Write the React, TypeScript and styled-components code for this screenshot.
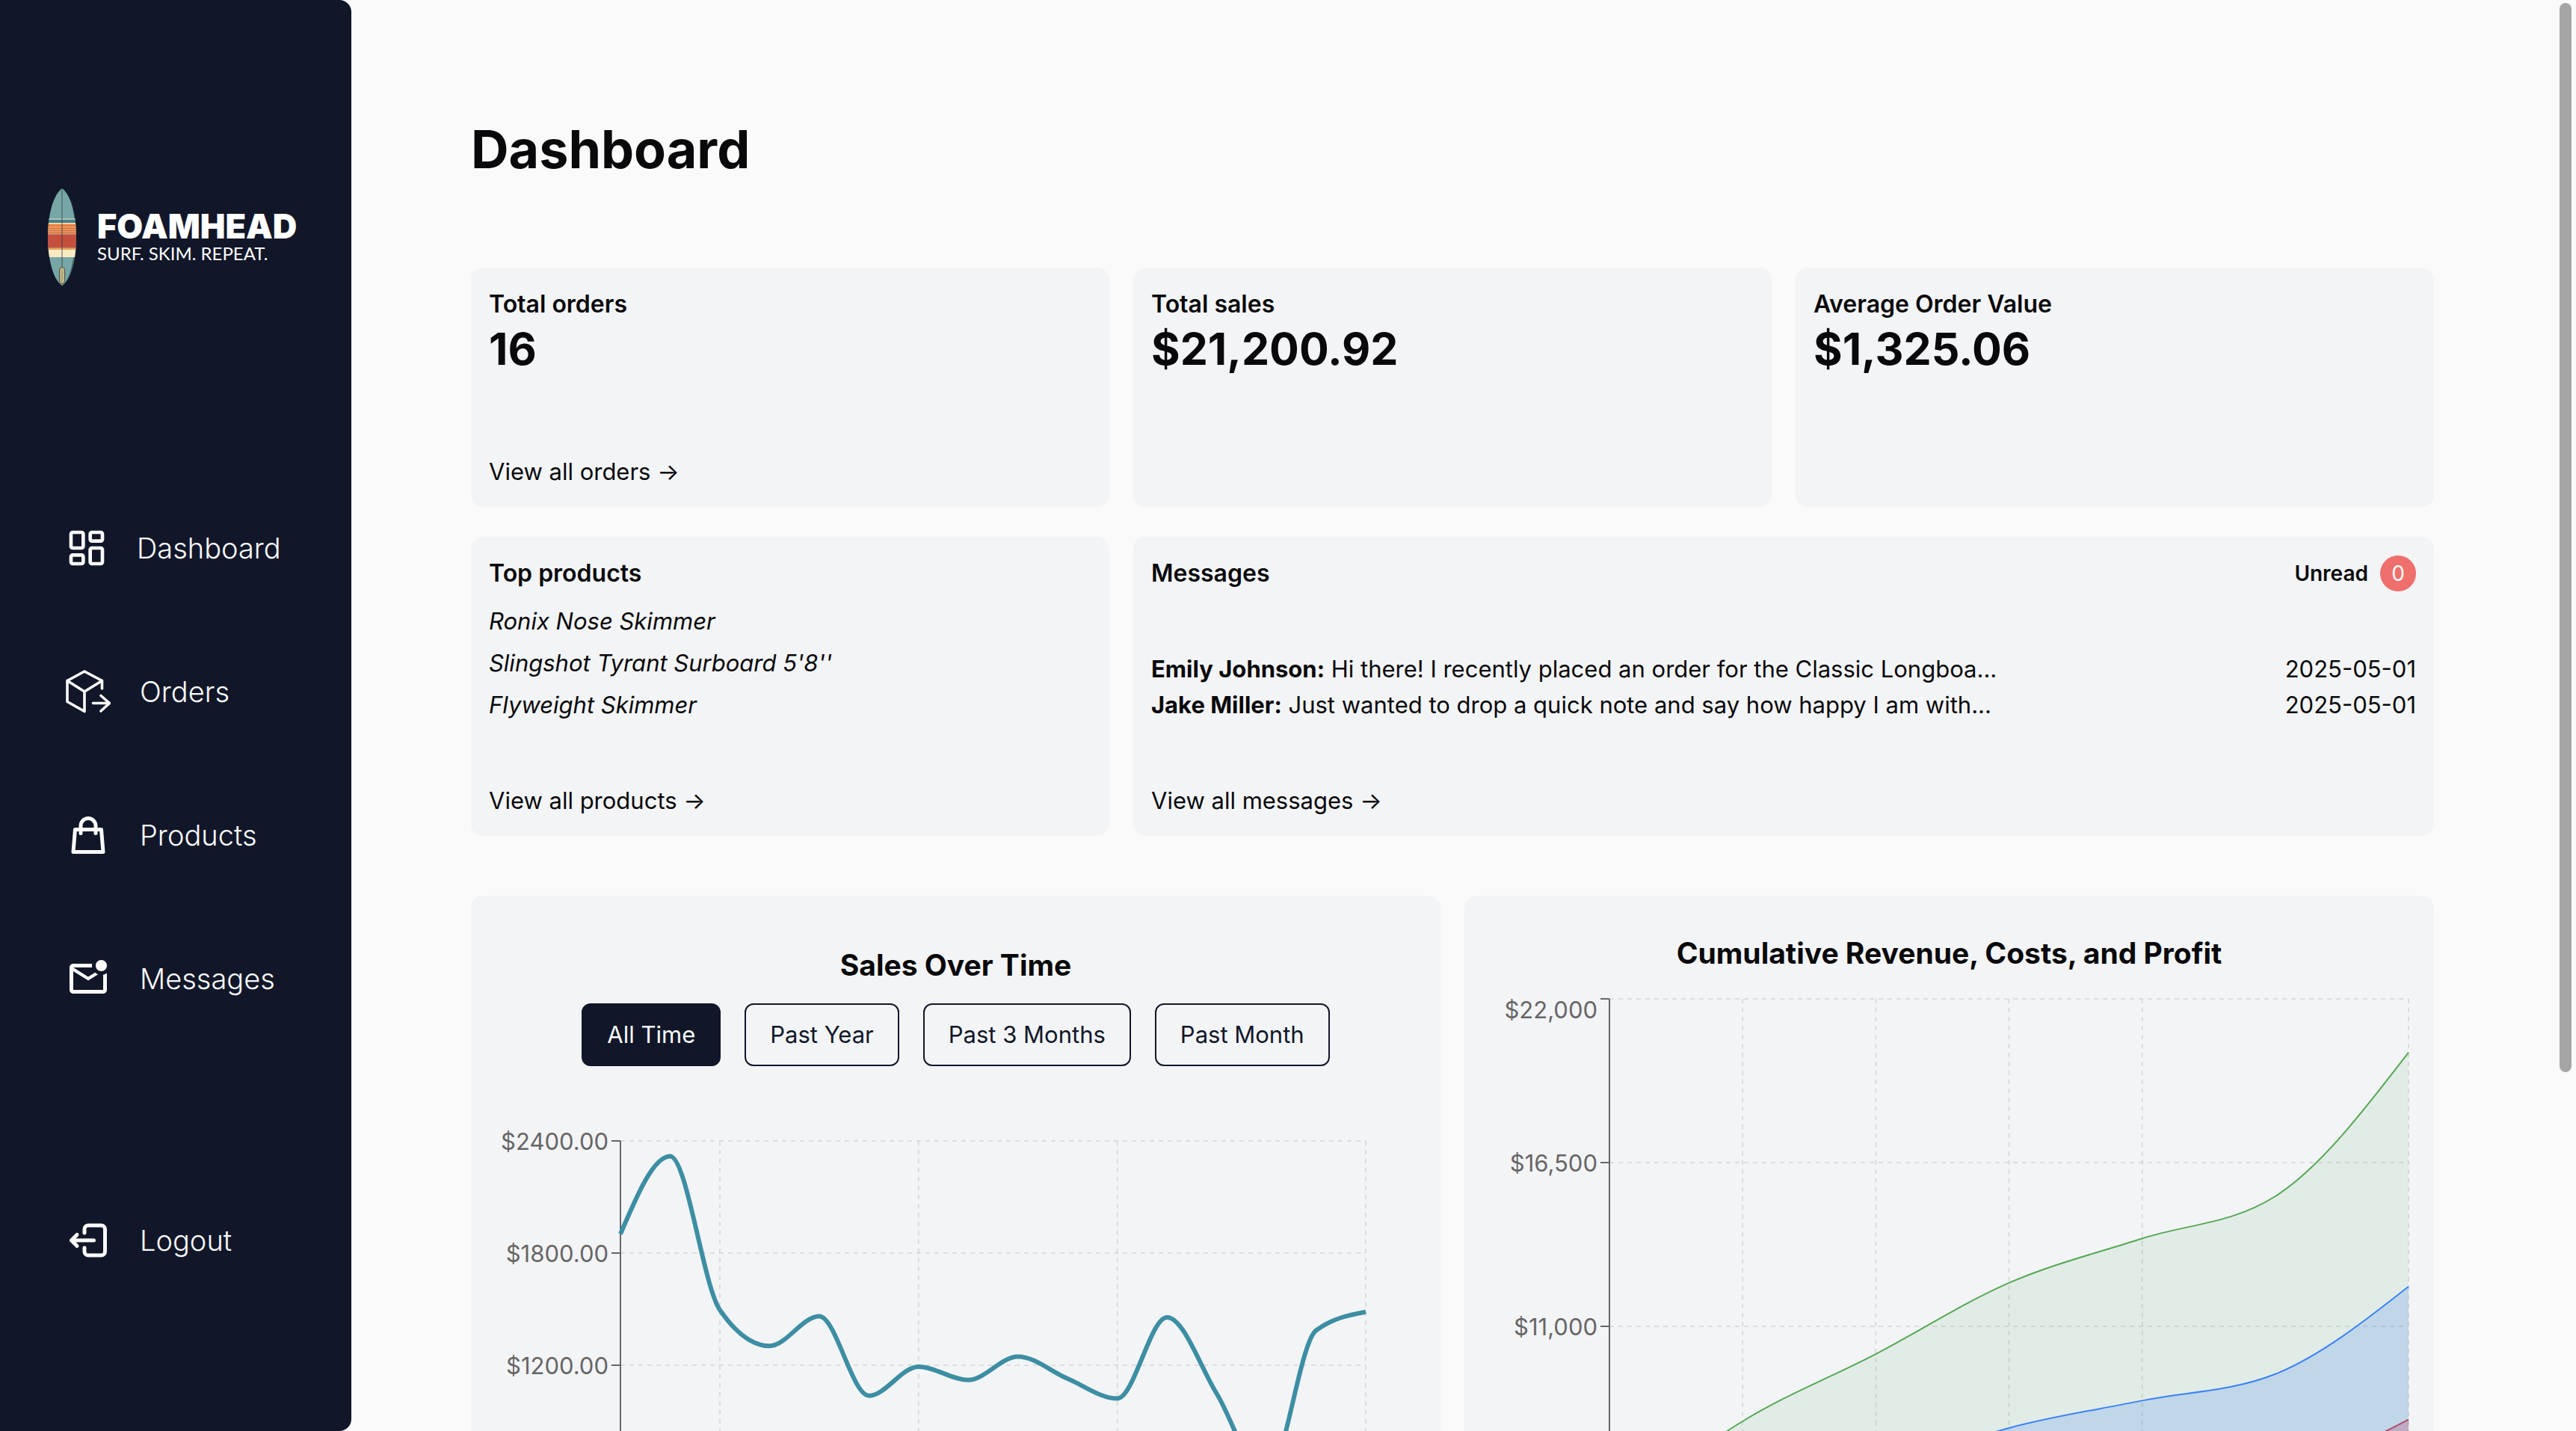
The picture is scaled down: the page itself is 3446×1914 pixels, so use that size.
import React, { useLayoutEffect, useRef, useState } from "react";
import styled, { createGlobalStyle, css } from "styled-components";
import { MdOutlineMarkEmailUnread } from "react-icons/md";

const navy = "#111729";
const ink = "#09090b";
const paper = "#fafafa";
const panel = "#f3f4f6";

const GlobalStyle = createGlobalStyle`
  *, *::before, *::after { box-sizing: border-box; }
  body {
    margin: 0;
    background: ${paper};
    color: ${ink};
    font-family: Inter, "Liberation Sans", sans-serif;
    font-size: 31px;
    line-height: 48px;
    -webkit-font-smoothing: antialiased;
  }
  h1, h2, h3, p, ul { margin: 0; padding: 0; }
  ul { list-style: none; }
  a { color: inherit; text-decoration: none; }
`;

const Shell = styled.div`
  display: flex;
  height: 100vh;
  overflow: hidden;
`;

const Sidebar = styled.aside`
  flex: 0 0 470px;
  display: flex;
  flex-direction: column;
  background: ${navy};
  color: ${paper};
  border-radius: 0 16px 16px 0;
`;

const Brand = styled.a`
  display: flex;
  align-items: center;
  gap: 25px;
  padding: 251px 0 0 63px;
`;

const BrandText = styled.span`
  display: flex;
  flex-direction: column;
  color: #fff;
`;

const BrandName = styled.span`
  font-size: 45px;
  font-weight: 900;
  line-height: 44px;
`;

const BrandTagline = styled.span`
  font-family: Lato, "Liberation Sans", sans-serif;
  font-size: 24px;
  font-weight: 400;
  line-height: 28px;
`;

const Nav = styled.nav`
  display: flex;
  flex-direction: column;
  gap: 132px;
  padding: 320px 0 0 88px;
`;

const NavFooter = styled.div`
  display: flex;
  padding: 290px 0 0 88px;
`;

const navItem = css`
  display: flex;
  align-items: center;
  gap: 39px;
  height: 60px;
  color: ${paper};
  font-size: 38px;
  font-weight: 300;
  line-height: 56px;
`;

const NavLink = styled.a`
  ${navItem}
`;

const LogoutButton = styled.button`
  ${navItem}
  padding: 0;
  border: 0;
  background: none;
  font-family: inherit;
  cursor: pointer;
`;

const Main = styled.main`
  flex: 1;
  min-width: 0;
  padding: 160px 160px 0;
`;

const PageTitle = styled.h1`
  font-size: 70px;
  font-weight: 700;
  line-height: 80px;
  margin-bottom: 118px;
`;

const StatGrid = styled.div`
  display: grid;
  grid-template-columns: repeat(3, minmax(0, 1fr));
  gap: 40px 32px;
`;

const Card = styled.section<{ $tall?: boolean; $wide?: boolean }>`
  display: flex;
  flex-direction: column;
  justify-content: space-between;
  min-height: ${(p) => (p.$tall ? 400 : 320)}px;
  grid-column: ${(p) => (p.$wide ? "span 2" : "auto")};
  padding: 25px 24px 23px;
  border-radius: 16px;
  background: ${panel};
`;

const CardTitle = styled.h2`
  font-size: 32px;
  font-weight: 600;
  line-height: 48px;
`;

const Figure = styled.p`
  font-size: 59px;
  font-weight: 700;
  line-height: 72px;
`;

const CardLink = styled.a`
  align-self: flex-start;
`;

const ProductList = styled.ul`
  display: flex;
  flex-direction: column;
  gap: 8px;
  margin-top: 16px;
  font-style: italic;
`;

const CardHeader = styled.div`
  display: flex;
  align-items: center;
  justify-content: space-between;
`;

const Unread = styled.div`
  display: flex;
  align-items: center;
  gap: 16px;
  font-size: 28px;
  font-weight: 600;
`;

const Badge = styled.span`
  width: 48px;
  height: 48px;
  border-radius: 50%;
  background: #ef6f6c;
  color: ${paper};
  font-weight: 400;
  text-align: center;
`;

const MessageRow = styled.li`
  display: flex;
  justify-content: space-between;
`;

const Sender = styled.strong`
  font-weight: 700;
`;

const ChartGrid = styled.div`
  display: grid;
  grid-template-columns: repeat(2, minmax(0, 1fr));
  gap: 32px;
  margin-top: 80px;
`;

const ChartCard = styled.section<{ $top: number }>`
  display: flex;
  flex-direction: column;
  align-items: center;
  padding: ${(p) => p.$top}px 24px 48px;
  border-radius: 16px;
  background: ${panel};
`;

const ChartTitle = styled.h3`
  font-size: 39px;
  font-weight: 700;
  line-height: 58px;
`;

const RangeBar = styled.div`
  display: flex;
  gap: 32px;
  margin: 22px 0 88px;
`;

const RangeButton = styled.button<{ $active?: boolean }>`
  padding: 16px 32px;
  border: 2px solid ${navy};
  border-radius: 12px;
  background: ${(p) => (p.$active ? navy : "transparent")};
  color: ${(p) => (p.$active ? paper : navy)};
  font-family: inherit;
  font-size: 31px;
  line-height: 48px;
  cursor: pointer;
`;

const ChartBox = styled.div`
  width: 100%;
`;

const ChartSvg = styled.svg`
  display: block;
  overflow: visible;
`;

const TickLabel = styled.text`
  fill: #666;
  font-size: 31px;
  text-anchor: end;
`;

const ScrollTrack = styled.div`
  flex: 0 0 30px;
  padding: 4px 6px 4px 8px;
`;

const ScrollThumb = styled.div`
  height: 75%;
  border-radius: 8px;
  background: #a5a5a5;
`;

/* ---------- icons ---------- */

const Surfboard = () => (
  <svg width="42" height="132" viewBox="0 0 42 132" aria-hidden="true">
    <defs>
      <clipPath id="board">
        <path d="M20 1C9 9 1 34 1 66c0 30 7 57 19 65 12-8 19-35 19-65C39 34 31 9 20 1z" />
      </clipPath>
    </defs>
    <g clipPath="url(#board)">
      <path d="M0 0h42v132H0z" fill="#76a6a5" />
      <path d="M22 0C32 12 37 32 37 64c0 30-4 50-15 68h20V0z" fill="#3c6069" />
      <path d="M20 0C31 12 38 34 38 66c0 24-6 44-14 58L20 132z" fill="#76a6a5" />
      <path d="M0 41h42v2H0z" fill="#a9c3b8" />
      <path d="M0 43h42v4H0z" fill="#4b7f86" />
      <path d="M0 47h42v2H0z" fill="#e9d9ae" />
      <path d="M0 49h42v4H0z" fill="#ee7b3c" />
      <path d="M0 53h42v9H0z" fill="#d8683c" />
      <path d="M0 53h42M0 56h42M0 59h42M0 62h42" stroke="#efc98c" strokeWidth="1.2" />
      <path d="M0 62.600h42v18H0z" fill="#c44f3e" />
      <path d="M0 80.500h42v2.500H0z" fill="#e8a256" />
      <path d="M0 83h42v10H0z" fill="#f8eac2" />
      <path d="M20 0v108" stroke="#333f42" strokeWidth="0.800" />
      <rect x="16.600" y="106.500" width="7" height="22" rx="3.500" fill="#c3b98a" stroke="#4a4a3d" />
      <path d="M20 110v16" stroke="#8d865f" strokeWidth="0.800" />
    </g>
  </svg>
);

const DashboardIcon = () => (
  <svg width="56" height="56" viewBox="0 0 24 24" fill="none" stroke="currentColor" strokeWidth="2" strokeLinejoin="round" aria-hidden="true">
    <rect x="3" y="3" width="7" height="9" rx="1" />
    <rect x="14" y="3" width="7" height="5" rx="1" />
    <rect x="14" y="12" width="7" height="9" rx="1" />
    <rect x="3" y="16" width="7" height="5" rx="1" />
  </svg>
);

const OrdersIcon = () => (
  <svg width="60" height="60" viewBox="0 0 60 60" fill="none" stroke="currentColor" strokeWidth="3.600" strokeLinecap="round" strokeLinejoin="round" aria-hidden="true">
    <path d="M25 56.500 2 43.500V15.500L25 3l23.500 12.500V26M2 15.500 25 30l23.500-14.500M25 30v26.500" />
    <path d="M36.500 45.500H58M47 35.500l11.500 10L47 56" />
  </svg>
);

const ProductsIcon = () => (
  <svg width="60" height="60" viewBox="0 0 24 24" fill="none" stroke="currentColor" strokeWidth="2" strokeLinecap="round" strokeLinejoin="round" aria-hidden="true">
    <path d="M16 11V7a4 4 0 0 0-8 0v4M5 9h14l1 12H4L5 9z" />
  </svg>
);

const LogoutIcon = () => (
  <svg width="60" height="60" viewBox="0 0 24 24" fill="none" stroke="currentColor" strokeWidth="2" strokeLinecap="round" strokeLinejoin="round" aria-hidden="true">
    <path d="M10 8V6a2 2 0 0 1 2-2h7a2 2 0 0 1 2 2v12a2 2 0 0 1-2 2h-7a2 2 0 0 1-2-2v-2" />
    <path d="M15 12H3l3-3M6 15l-3-3" />
  </svg>
);

/* ---------- charts ---------- */

type Point = [number, number];

/* Monotone cubic interpolation: the curve never overshoots its data. */
function monotonePath(pts: Point[]): string {
  const n = pts.length;
  const slope = (i: number) => (pts[i + 1][1] - pts[i][1]) / (pts[i + 1][0] - pts[i][0]);
  const t: number[] = new Array(n).fill(0);
  for (let i = 1; i < n - 1; i++) {
    const h0 = pts[i][0] - pts[i - 1][0];
    const h1 = pts[i + 1][0] - pts[i][0];
    const s0 = slope(i - 1);
    const s1 = slope(i);
    const p = (s0 * h1 + s1 * h0) / (h0 + h1);
    t[i] = (Math.sign(s0) + Math.sign(s1)) * Math.min(Math.abs(s0), Math.abs(s1), 0.5 * Math.abs(p)) || 0;
  }
  t[0] = (3 * slope(0) - t[1]) / 2;
  t[n - 1] = (3 * slope(n - 2) - t[n - 2]) / 2;
  let d = `M${pts[0][0]},${pts[0][1]}`;
  for (let i = 1; i < n; i++) {
    const [x0, y0] = pts[i - 1];
    const [x1, y1] = pts[i];
    const dx = (x1 - x0) / 3;
    d += `C${x0 + dx},${y0 + dx * t[i - 1]},${x1 - dx},${y1 - dx * t[i]},${x1},${y1}`;
  }
  return d;
}

type Series = { values: number[]; stroke: string; width: number; fill?: string; fillOpacity?: number };
type Tick = { value: number; label: string; dy?: number };
type ChartProps = {
  label: string;
  max: number;
  plotHeight: number;
  left: number;
  right: number;
  top: number;
  ticks: Tick[];
  columns: number[];
  series: Series[];
};

function Chart({ label, max, plotHeight, left, right, top, ticks, columns, series }: ChartProps) {
  const box = useRef<HTMLDivElement>(null);
  const [width, setWidth] = useState(1200);
  useLayoutEffect(() => {
    const el = box.current;
    if (!el) return;
    const measure = () => setWidth(el.clientWidth);
    measure();
    const observer = new ResizeObserver(measure);
    observer.observe(el);
    return () => observer.disconnect();
  }, []);

  const end = width - right;
  const steps = series[0].values.length - 1;
  const x = (i: number) => left + ((end - left) * i) / steps;
  const y = (v: number) => top + plotHeight * (1 - v / max);
  const bottom = top + plotHeight;

  return (
    <ChartBox ref={box}>
      <ChartSvg width={width} height={bottom + 60} role="img" aria-label={label}>
        <g stroke="#ccc" strokeOpacity="0.6" strokeWidth="2" strokeDasharray="6 6">
          {ticks.map((t) => (
            <line key={t.value} x1={left} x2={end} y1={y(t.value)} y2={y(t.value)} />
          ))}
          {columns.map((c) => (
            <line key={c} x1={x(c)} x2={x(c)} y1={top} y2={bottom} />
          ))}
        </g>
        <g stroke="#666" strokeWidth="2">
          <line x1={left} x2={left} y1={top} y2={bottom} />
          {ticks.map((t) => (
            <line key={t.value} x1={left - 12} x2={left} y1={y(t.value)} y2={y(t.value)} />
          ))}
        </g>
        {ticks.map((t) => (
          <TickLabel key={t.value} x={left - 16} y={y(t.value) + 12 + (t.dy ?? 0)}>
            {t.label}
          </TickLabel>
        ))}
        {series.map((s, k) => {
          const d = monotonePath(s.values.map((v, i) => [x(i), y(v)] as Point));
          return (
            <g key={k}>
              {s.fill && <path d={`${d}L${end},${bottom}L${left},${bottom}Z`} fill={s.fill} fillOpacity={s.fillOpacity} />}
              <path d={d} fill="none" stroke={s.stroke} strokeWidth={s.width} />
            </g>
          );
        })}
      </ChartSvg>
    </ChartBox>
  );
}

const ranges = ["All Time", "Past Year", "Past 3 Months", "Past Month"];

const salesTicks: Tick[] = [
  { value: 2400, label: "$2400.00" },
  { value: 1800, label: "$1800.00" },
  { value: 1200, label: "$1200.00" },
];

const revenueTicks: Tick[] = [
  { value: 22000, label: "$22,000", dy: 14 },
  { value: 16500, label: "$16,500" },
  { value: 11000, label: "$11,000" },
];

const sales = [1902, 2318, 1496, 1303, 1462, 1037, 1192, 1121, 1246, 1128, 1022, 1456, 1048, 594, 1386, 1485];

const products = ["Ronix Nose Skimmer", "Slingshot Tyrant Surboard 5'8''", "Flyweight Skimmer"];

const messages = [
  { from: "Emily Johnson:", text: "Hi there! I recently placed an order for the Classic Longboa...", date: "2025-05-01" },
  { from: "Jake Miller:", text: "Just wanted to drop a quick note and say how happy I am with...", date: "2025-05-01" },
];

export default function App() {
  const [range, setRange] = useState(ranges[0]);

  return (
    <>
      <GlobalStyle />
      <Shell>
        <Sidebar>
          <Brand href="#home">
            <Surfboard />
            <BrandText>
              <BrandName>FOAMHEAD</BrandName>
              <BrandTagline>SURF. SKIM. REPEAT.</BrandTagline>
            </BrandText>
          </Brand>
          <Nav>
            <NavLink href="#dashboard"><DashboardIcon />Dashboard</NavLink>
            <NavLink href="#orders"><OrdersIcon />Orders</NavLink>
            <NavLink href="#products"><ProductsIcon />Products</NavLink>
            <NavLink href="#messages"><MdOutlineMarkEmailUnread size={60} />Messages</NavLink>
          </Nav>
          <NavFooter>
            <LogoutButton type="button"><LogoutIcon />Logout</LogoutButton>
          </NavFooter>
        </Sidebar>

        <Main>
          <PageTitle>Dashboard</PageTitle>
          <StatGrid>
            <Card>
              <div>
                <CardTitle>Total orders</CardTitle>
                <Figure>16</Figure>
              </div>
              <CardLink href="#orders">View all orders →</CardLink>
            </Card>
            <Card>
              <div>
                <CardTitle>Total sales</CardTitle>
                <Figure>$21,200.92</Figure>
              </div>
            </Card>
            <Card>
              <div>
                <CardTitle>Average Order Value</CardTitle>
                <Figure>$1,325.06</Figure>
              </div>
            </Card>
            <Card $tall>
              <div>
                <CardTitle>Top products</CardTitle>
                <ProductList>
                  {products.map((p) => <li key={p}>{p}</li>)}
                </ProductList>
              </div>
              <CardLink href="#products">View all products →</CardLink>
            </Card>
            <Card $tall $wide>
              <CardHeader>
                <CardTitle>Messages</CardTitle>
                <Unread>Unread<Badge>0</Badge></Unread>
              </CardHeader>
              <ul>
                {messages.map((m) => (
                  <MessageRow key={m.from}>
                    <span><Sender>{m.from}</Sender> {m.text}</span>
                    <time dateTime={m.date}>{m.date}</time>
                  </MessageRow>
                ))}
              </ul>
              <CardLink href="#messages">View all messages →</CardLink>
            </Card>
          </StatGrid>

          <ChartGrid>
            <ChartCard $top={64}>
              <ChartTitle>Sales Over Time</ChartTitle>
              <RangeBar>
                {ranges.map((r) => (
                  <RangeButton key={r} type="button" $active={r === range} onClick={() => setRange(r)}>
                    {r}
                  </RangeButton>
                ))}
              </RangeBar>
              <Chart
                label="Sales over time"
                max={2400}
                plotHeight={600}
                left={176}
                right={76}
                top={12}
                ticks={salesTicks}
                columns={[2, 6, 10, 15]}
                series={[{ values: sales, stroke: "#3d8ea3", width: 6 }]}
              />
            </ChartCard>
            <ChartCard $top={48}>
              <ChartTitle>Cumulative Revenue, Costs, and Profit</ChartTitle>
              <Chart
                label="Cumulative revenue, costs, and profit"
                max={22000}
                plotHeight={876}
                left={170}
                right={10}
                top={32}
                ticks={revenueTicks}
                columns={[1, 2, 3, 4, 6]}
                series={[
                  { values: [4600, 7810, 10070, 12460, 13950, 15370, 20200], stroke: "#55a855", width: 2, fill: "#53a456", fillOpacity: 0.1 },
                  { values: [2800, 4700, 6100, 7585, 8504, 9398, 12339], stroke: "#3b82f6", width: 2, fill: "#3b82f6", fillOpacity: 0.2 },
                  { values: [1800, 3110, 3970, 4875, 5446, 5972, 7870], stroke: "#b0506c", width: 2, fill: "#b3486b", fillOpacity: 0.3 },
                ]}
              />
            </ChartCard>
          </ChartGrid>
        </Main>
        <ScrollTrack aria-hidden="true"><ScrollThumb /></ScrollTrack>
      </Shell>
    </>
  );
}
